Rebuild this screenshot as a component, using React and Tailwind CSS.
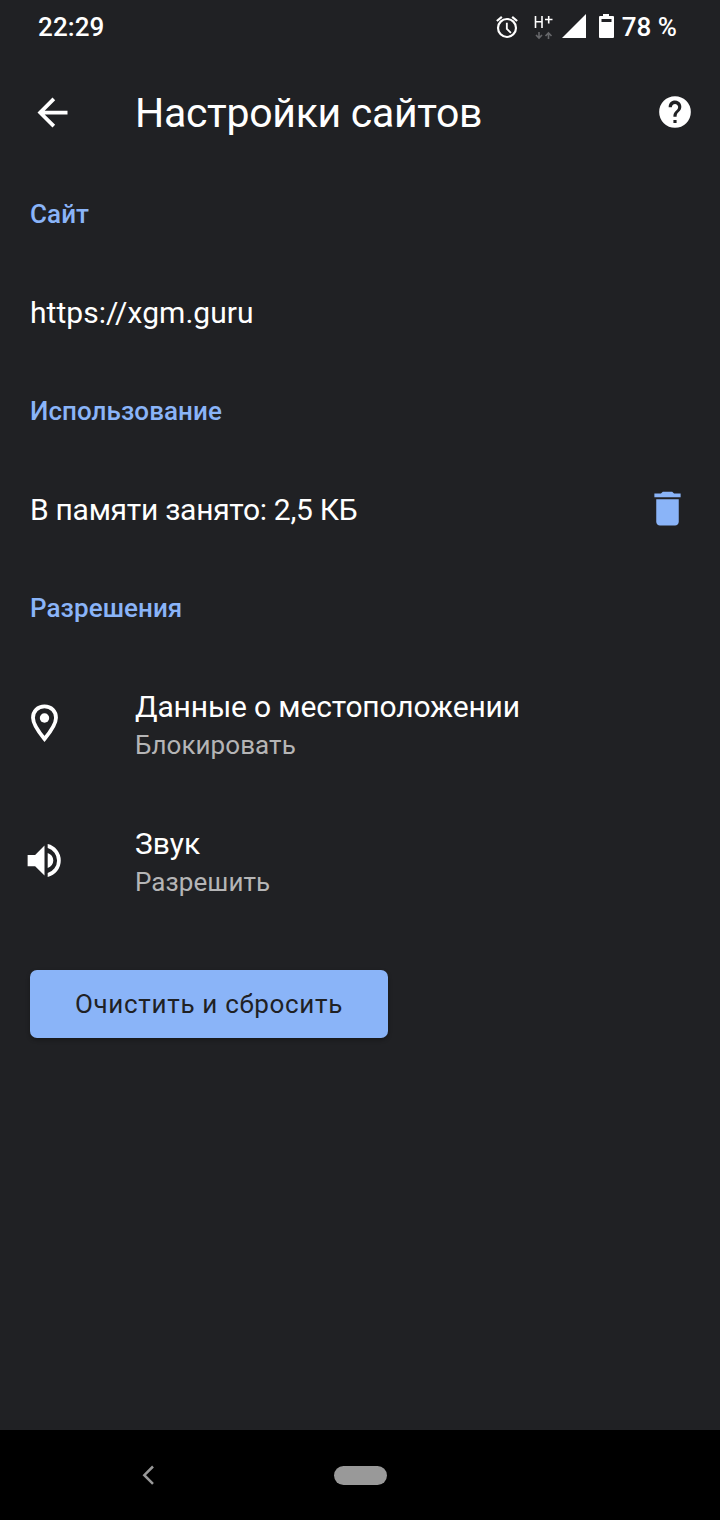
const Heading = ({ children }) => (
  <h2 className="h-[30px] whitespace-nowrap text-[26px] font-medium leading-[30px] tracking-[0.07px] text-[#8ab4f8]">{children}</h2>
);

const Permission = ({ icon, title, value, titleClass }) => (
  <div className="flex h-[76px] items-start">
    <div className="flex w-[105px] shrink-0">{icon}</div>
    <div className="whitespace-nowrap">
      <div className={`text-[30px] leading-[38px] ${titleClass}`}>{title}</div>
      <div className="text-[26px] leading-[38px] tracking-[0.06px] text-[#b5b5b6]">{value}</div>
    </div>
  </div>
);

export default function App() {
  return (
    <div className="flex h-[1520px] w-[720px] flex-col overflow-hidden bg-[#202124] font-['Roboto',sans-serif] text-white">
      <div className="flex h-[54px] items-center justify-between pl-[38px] pr-[43px] text-[26px] font-medium leading-[30px]">
        <span className="tracking-[0.1px]">22:29</span>
        <div className="flex items-center">
          <svg className="mr-[13px] size-[26px]" viewBox="0 0 24 24" fill="currentColor"><path d="M22 5.72l-4.6-3.86-1.29 1.53 4.6 3.86L22 5.72zM7.88 3.39L6.6 1.86 2 5.71l1.29 1.53 4.59-3.85zM12.7 8H11v6l4 4 1.200-1.200-3.500-3.500V8zM12 3.600a9.300 9.300 0 1 0 0 18.600 9.300 9.300 0 0 0 0-18.600zm0 16.600a7.300 7.300 0 1 1 0-14.600 7.300 7.300 0 0 1 0 14.600z" /></svg>
          <svg className="mr-[9px] mt-[-1px] h-[26px] w-[20px]" viewBox="0 0 20 26" fill="none" stroke="currentColor"><path d="M2.500 2v12M9 2v12M2.500 7.800H9M12 5.500h7.500M15.700 2v7.500" strokeWidth="1.600" /><path d="M6 18v6M3 21l3 3 3-3M15.500 25v-6M12.500 22l3-3 3 3" stroke="#66676a" strokeWidth="1.600" /></svg>
          <svg className="mr-[12px] mt-[-2px] size-[24px]" viewBox="0 0 24 24" fill="currentColor"><path d="M24 0v24H0z" /></svg>
          <svg className="mr-[8px] mt-[-2px] h-[24px] w-[16px]" viewBox="0 0 16 24" fill="currentColor"><path fillRule="evenodd" d="M5 0h6v2h4q1 0 1 1v20q0 1-1 1H2q-1 0-1-1V3q0-1 1-1h3zM3.500 5v3h10V5z" /></svg>
          <span className="whitespace-nowrap">78 %</span>
        </div>
      </div>
      <header className="flex h-[117px] items-center pl-[30px] pr-[26px]">
        <svg className="size-[45px]" viewBox="0 0 24 24" fill="currentColor"><path d="M20 11H7.830l5.590-5.590L12 4l-8 8 8 8 1.410-1.410L7.830 13H20z" /></svg>
        <h1 className="ml-[60px] whitespace-nowrap text-[41px] leading-[48px] tracking-[-0.3px]">Настройки сайтов</h1>
        <svg className="ml-auto mt-[-1px] size-[38px]" viewBox="0 0 24 24" fill="currentColor"><path d="M12 2a10 10 0 1 0 0 20 10 10 0 0 0 0-20zm1 17h-2v-2h2zm2.070-7.750l-.9.920C13.450 12.900 13 13.500 13 15h-2v-.5c0-1.100.450-2.100 1.170-2.830l1.240-1.260A2 2 0 1 0 10 9H8a4 4 0 1 1 7.070 2.250z" /></svg>
      </header>
      <main className="flex grow flex-col px-[30px] pt-[28px]">
        <Heading>Сайт</Heading>
        <div className="mt-[64px] h-[40px] text-[30px] leading-[40px] tracking-[0.04px]">https://xgm.guru</div>
        <div className="mt-[63px]"><Heading>Использование</Heading></div>
        <div className="mt-[63px] flex h-[40px] items-center justify-between whitespace-nowrap text-[30px] leading-[40px]">
          <span className="mt-[2px] tracking-[-0.28px]">В памяти занято: 2,5 КБ</span>
          <svg className="mt-[-2px] size-[45px]" viewBox="0 0 24 24" fill="#8ab4f8"><path d="M6 19c0 1.100.9 2 2 2h8c1.100 0 2-.9 2-2V7H6zM19 4h-3.500l-1-1h-5l-1 1H5v2h14z" /></svg>
        </div>
        <div className="mt-[64px]"><Heading>Разрешения</Heading></div>
        <div className="mt-[65px] flex flex-col gap-[61px]">
          <Permission titleClass="tracking-[-0.15px]" title="Данные о местоположении" value="Блокировать" icon={<svg className="mt-[16px] h-[38px] w-[28px]" viewBox="0 0 28 38"><path d="M14.500 2.400C7.800 2.400 3 7.200 3 13.800c0 6.200 5.500 14 11.500 21.200C20.500 27.800 26 20 26 13.800 26 7.200 21.200 2.400 14.500 2.400z" fill="none" stroke="currentColor" strokeWidth="3.800" /><circle cx="14.500" cy="14" r="4.700" fill="currentColor" /></svg>} />
          <Permission titleClass="tracking-normal" title="Звук" value="Разрешить" icon={<svg className="-ml-[8px] mt-[13px] size-[45px]" viewBox="0 0 24 24" fill="currentColor"><path d="M3 9v6h4l5 5V4L7 9zm13.700 3A4.500 4.500 0 0 0 13.700 7.970v8.050A4.500 4.500 0 0 0 16.700 12zM13.700 3.230v2.060a7 7 0 0 1 0 13.420v2.060a9 9 0 0 0 0-17.540z" /></svg>} />
        </div>
        <button className="mt-[69px] h-[68px] w-[358px] whitespace-nowrap rounded-[7px] bg-[#8ab4f8] text-[26px] font-[450] tracking-[0.68px] text-[#202124] shadow-[0_2px_4px_rgba(0,0,0,0.3)]">Очистить и сбросить</button>
      </main>
      <nav className="flex h-[90px] shrink-0 items-center bg-black pl-[141px]">
        <svg className="h-[20px] w-[14px]" viewBox="0 0 14 20" fill="none" stroke="#999" strokeWidth="2.500"><path d="M12 1.500l-8.700 8.700 8.700 8.700" /></svg>
        <div className="ml-[179px] h-[19px] w-[53px] rounded-full bg-[#999]" />
      </nav>
    </div>
  );
}
